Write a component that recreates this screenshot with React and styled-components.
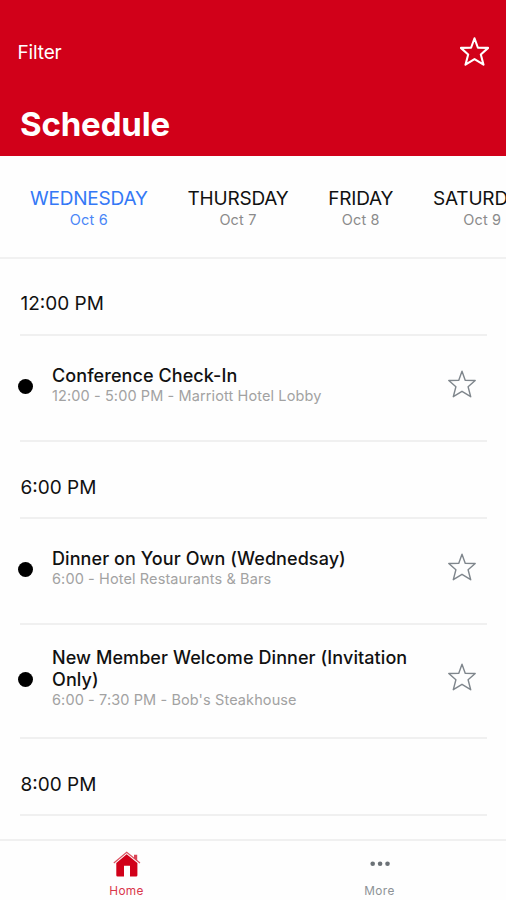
import styled, { createGlobalStyle } from "styled-components";

const GlobalStyle = createGlobalStyle`
  * {
    box-sizing: border-box;
  }

  body {
    margin: 0;
    background: #fefefe;
    font-family: Inter, "Liberation Sans", sans-serif;
    color: #111;
  }
`;

const Screen = styled.div`
  width: 100%;
  height: 100vh;
  display: flex;
  flex-direction: column;
  overflow: hidden;
`;

const Header = styled.header`
  flex: none;
  height: 156.4px;
  padding: 37px 17px 0 17.5px;
  background: #d10019;
  color: #fff;
`;

const Toolbar = styled.div`
  display: flex;
  justify-content: space-between;
  height: 30px;
`;

const FilterLink = styled.span`
  font-size: 19px;
  line-height: 31px;
  letter-spacing: -0.15px;
`;

const Title = styled.h1`
  margin: 37px 0 0 2.5px;
  font-size: 33px;
  font-weight: 700;
  line-height: 40px;
  letter-spacing: -0.15px;
`;

const Days = styled.nav`
  flex: none;
  display: flex;
  gap: 39.8px;
  height: 102.6px;
  padding: 32.8px 0 0 30px;
  border-bottom: 2px solid #f1f1f1;
  overflow: hidden;
`;

const Day = styled.div`
  flex: none;
  text-align: center;
  color: ${({ $active }) => ($active ? "#3478f6" : "#111")};
`;

const DayName = styled.div`
  font-size: 19px;
  line-height: 20px;
  letter-spacing: -0.2px;
`;

const DayDate = styled.div`
  font-size: 14.5px;
  line-height: 21px;
  letter-spacing: 0.15px;
  color: ${({ $active }) => ($active ? "#4a86f7" : "#8b8b8b")};
`;

const List = styled.main`
  flex: 1;
  min-height: 0;
  padding: 0 19px 0 20px;
  overflow: hidden;
`;

const Time = styled.h2`
  margin: 0;
  height: 77px;
  padding: ${({ $first }) => ($first ? "33.4px" : "34px")} 0 0 0.5px;
  border-bottom: 2px solid #f0f0f0;
  font-size: 19px;
  font-weight: 400;
  line-height: 24px;
`;

const Row = styled.div`
  display: flex;
  align-items: center;
  height: ${({ $tall }) => ($tall ? "114px" : "106px")};
  padding: 0 11px 7.5px 0;
  border-bottom: 2px solid #f0f0f0;
`;

const Dot = styled.span`
  flex: none;
  width: 15px;
  height: 15px;
  margin: 4px 19px 0 -2px;
  border-radius: 50%;
  background: #000;
`;

const Info = styled.div`
  flex: 1;
  padding-top: 1px;
`;

const EventName = styled.div`
  max-width: 370px;
  font-size: 18px;
  font-weight: 500;
  line-height: 22px;
  letter-spacing: 0.08px;
`;

const EventMeta = styled.div`
  font-size: 14.5px;
  line-height: 18px;
  letter-spacing: 0.11px;
  color: #a2a2a2;
`;

const TabBar = styled.footer`
  flex: none;
  display: flex;
  height: 61px;
  border-top: 2px solid #f0f0f0;
`;

const Tab = styled.div`
  flex: 1;
  display: flex;
  flex-direction: column;
  align-items: center;
  padding-top: 10px;
  font-size: 11.8px;
  line-height: 16px;
  letter-spacing: 0.35px;
  color: ${({ $active }) => ($active ? "#d9364a" : "#8d9296")};

  svg {
    flex: none;
    margin-bottom: 6px;
  }
`;

const StarIcon = ({ size = 28, color = "#7f868c", width = 1.4 }) => (
  <svg width={size} height={size} viewBox="0 0 28 28" fill="none">
    <path
      d="M14 1.2 17.3 10.4 27.2 10.5 20.1 16.8 22.7 26.7 14 21.3 5.3 26.7 7.9 16.8 .8 10.5 10.7 10.4Z"
      stroke={color}
      strokeWidth={width}
      strokeLinejoin="round"
    />
  </svg>
);

const HomeIcon = () => (
  <svg width="28" height="26" viewBox="0 0 28 26">
    <path
      d="M3.3 12 13.7 3.3 24.4 12V24.2Q24.4 25.5 23.1 25.5H17V14.8H11V25.5H4.6Q3.3 25.5 3.3 24.2Z"
      fill="#d10019"
    />
    <path
      d="M.8 12 13.7 1.2 27 12"
      fill="none"
      stroke="#dc5362"
      strokeWidth="1.2"
    />
    <path d="M21 3.8H24.2V9.7L21 7.1Z" fill="#d94455" />
  </svg>
);

const MoreIcon = () => (
  <svg width="28" height="26" viewBox="0 0 28 26" fill="#6b7176">
    <circle cx="6.7" cy="12.8" r="2.3" />
    <circle cx="14.1" cy="12.8" r="2.3" />
    <circle cx="21.5" cy="12.8" r="2.3" />
  </svg>
);

const days = [
  { name: "WEDNESDAY", date: "Oct 6", active: true },
  { name: "THURSDAY", date: "Oct 7" },
  { name: "FRIDAY", date: "Oct 8" },
  { name: "SATURDAY", date: "Oct 9" },
];

const schedule = [
  {
    time: "12:00 PM",
    events: [
      {
        name: "Conference Check-In",
        meta: "12:00 - 5:00 PM - Marriott Hotel Lobby",
      },
    ],
  },
  {
    time: "6:00 PM",
    events: [
      {
        name: "Dinner on Your Own (Wednedsay)",
        meta: "6:00 - Hotel Restaurants & Bars",
      },
      {
        name: "New Member Welcome Dinner (Invitation Only)",
        meta: "6:00 - 7:30 PM - Bob's Steakhouse",
        tall: true,
      },
    ],
  },
  { time: "8:00 PM", events: [] },
];

const App = () => {
  return (
    <>
      <GlobalStyle />
      <Screen>
        <Header>
          <Toolbar>
            <FilterLink>Filter</FilterLink>
            <StarIcon size={29} color="#fff" width={2} />
          </Toolbar>
          <Title>Schedule</Title>
        </Header>
        <Days>
          {days.map(({ name, date, active }) => (
            <Day key={name} $active={active}>
              <DayName>{name}</DayName>
              <DayDate $active={active}>{date}</DayDate>
            </Day>
          ))}
        </Days>
        <List>
          {schedule.map(({ time, events }, i) => (
            <section key={time}>
              <Time $first={i === 0}>{time}</Time>
              {events.map(({ name, meta, tall }) => (
                <Row key={name} $tall={tall}>
                  <Dot />
                  <Info>
                    <EventName>{name}</EventName>
                    <EventMeta>{meta}</EventMeta>
                  </Info>
                  <StarIcon />
                </Row>
              ))}
            </section>
          ))}
        </List>
        <TabBar>
          <Tab $active>
            <HomeIcon />
            Home
          </Tab>
          <Tab>
            <MoreIcon />
            More
          </Tab>
        </TabBar>
      </Screen>
    </>
  );
};

export default App;
